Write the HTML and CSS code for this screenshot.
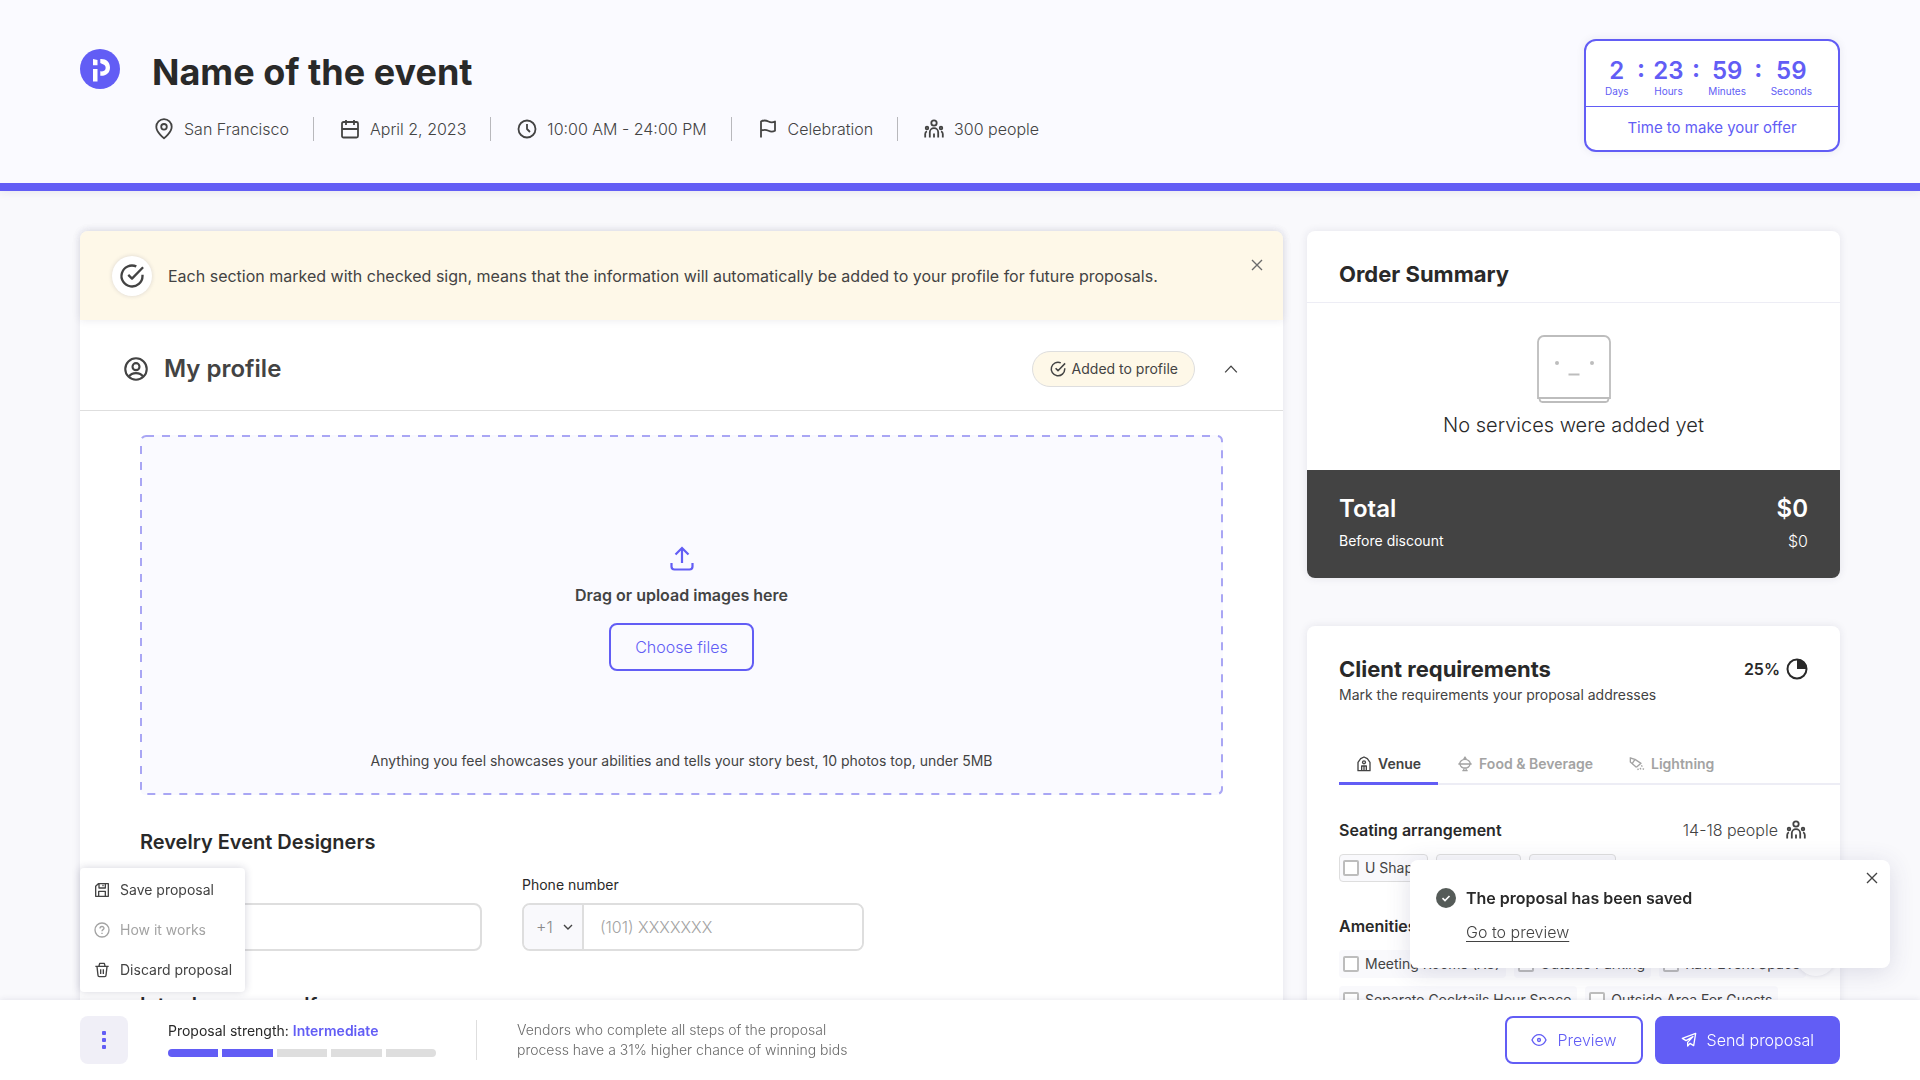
FILE: index.html
```html
<!DOCTYPE html>
<html lang="en">
<head>
<meta charset="utf-8">
<meta name="viewport" content="width=device-width, initial-scale=1">
<title>Name of the event</title>
<link rel="stylesheet" href="styles.css">
</head>
<body>
<svg class="sprite" aria-hidden="true">
  <symbol id="people" viewBox="0 0 24 24">
    <circle cx="12" cy="6" r="2.700"/><circle cx="5" cy="11" r="1.300"/><circle cx="19" cy="11" r="1.300"/>
    <path d="M7.800 20.500v-5.200a4.200 4.200 0 0 1 8.400 0v5.200M12 16.500v4M3.200 20.500v-3.600c0-1.400.6-2.300 1.800-2.600M20.800 20.500v-3.600c0-1.400-.6-2.300-1.800-2.600"/>
  </symbol>
  <symbol id="check-ring" viewBox="0 0 24 24">
    <path d="M21 11v1a9 9 0 1 1-5.300-8.200M21.500 4.500 12 14.200l-3.200-3.200"/>
  </symbol>
  <symbol id="cross" viewBox="0 0 24 24"><path d="M6 6l12 12M18 6 6 18"/></symbol>
</svg>

<header class="header">
  <svg class="logo" viewBox="0 0 40 40" role="img" aria-label="Logo">
    <circle cx="20" cy="20" r="20" fill="#625df5"/>
    <path fill="#fff" d="M13 10 17.500 11V16.300H13zM13 20H17.500V32.500H13zM20.300 10C26 9.500 30 13 30 18.500S26 27.200 20.300 26.800V22.300C24 22.800 26 21.500 25.600 18.300 25.300 15.500 23 15.500 20.300 14z"/>
  </svg>
  <div class="event">
    <h1 class="event-name">Name of the event</h1>
    <ul class="meta">
      <li><svg class="icon" viewBox="0 0 24 24"><path d="M12 21.300S4.300 15.500 4.300 9.800a7.700 7.700 0 0 1 15.400 0c0 5.700-7.700 11.500-7.700 11.500z"/><circle cx="12" cy="9.800" r="2.800"/></svg>San Francisco</li>
      <li><svg class="icon" viewBox="0 0 24 24"><rect x="4" y="5" width="16" height="15.500" rx="1.500"/><path d="M8 3v5M16 3v5M4 12h16"/></svg>April 2, 2023</li>
      <li><svg class="icon" viewBox="0 0 24 24"><circle cx="12" cy="12" r="8.500"/><path d="M12 7v5l3 3"/></svg>10:00 AM - 24:00 PM</li>
      <li><svg class="icon" viewBox="0 0 24 24"><path d="M5 20.500V4.500c3-1.800 5.500-1 7.500 0s4.500 1 6.500 0v9.300c-2 1-4.500 1-6.500 0s-4.500-1.500-7.500 0"/></svg>Celebration</li>
      <li><svg class="icon"><use href="#people"/></svg>300 people</li>
    </ul>
  </div>
  <div class="timer">
    <div class="timer-row">
      <div class="unit"><b>2</b><span>Days</span></div><b class="colon">:</b>
      <div class="unit"><b>23</b><span>Hours</span></div><b class="colon">:</b>
      <div class="unit"><b>59</b><span>Minutes</span></div><b class="colon">:</b>
      <div class="unit"><b>59</b><span>Seconds</span></div>
    </div>
    <div class="timer-note">Time to make your offer</div>
  </div>
</header>

<main class="main">
  <section class="card profile">
    <div class="banner">
      <span class="banner-mark"><svg class="icon icon-lg"><use href="#check-ring"/></svg></span>
      <p>Each section marked with checked sign, means that the information will automatically be added to your profile for future proposals.</p>
      <button class="plain banner-close" type="button" aria-label="Close"><svg class="icon icon-thin"><use href="#cross"/></svg></button>
    </div>
    <div class="profile-head">
      <svg class="icon icon-xl" viewBox="0 0 24 24"><circle cx="12" cy="12" r="9.200"/><circle cx="12" cy="10" r="3"/><path d="M6 18.500c1.300-2.200 3.200-3 6-3s4.700.8 6 3"/></svg>
      <h2>My profile</h2>
      <span class="badge"><svg class="icon icon-md"><use href="#check-ring"/></svg>Added to profile</span>
      <button class="plain" type="button" aria-label="Collapse"><svg class="icon icon-thin" viewBox="0 0 24 24"><path d="M5 16 12 8.500l7 7.500"/></svg></button>
    </div>
    <div class="profile-body">
      <div class="drop">
        <svg class="drop-outline" aria-hidden="true"><rect x="1" y="1" rx="5"/></svg>
        <div class="drop-main">
          <svg class="upload" viewBox="0 0 28 28"><path d="M14 18V3.500M7.500 9.500 14 3l6.500 6.500M3.500 18v3.500a3 3 0 0 0 3 3h15a3 3 0 0 0 3-3V18"/></svg>
          <p class="drop-title">Drag or upload images here</p>
          <button class="btn btn-outline" type="button">Choose files</button>
        </div>
        <p class="drop-note">Anything you feel showcases your abilities and tells your story best, 10 photos top, under 5MB</p>
      </div>
      <h3>Revelry Event Designers</h3>
      <form class="fields">
        <div class="field">
          <input class="control" type="text" aria-label="Name">
        </div>
        <div class="field">
          <label for="phone">Phone number</label>
          <div class="control phone">
            <span class="code">
              <select aria-label="Country code"><option>+1</option></select>
              <svg class="caret" viewBox="0 0 12 12"><path d="M2 4l4 4 4-4"/></svg>
            </span>
            <input id="phone" type="tel" placeholder="(101) XXXXXXX">
          </div>
        </div>
      </form>
      <h3>Introduce yourself</h3>
    </div>
  </section>

  <aside class="side">
    <section class="card">
      <h2 class="side-title order-title">Order Summary</h2>
      <div class="empty">
        <svg class="face" viewBox="0 0 74 68"><path d="M1 63V7a6 6 0 0 1 6-6h60a6 6 0 0 1 6 6v56zM2.500 63q0 4 3 4h63q3 0 3-4M31.500 39.500h11"/><circle cx="20" cy="28" r="2"/><circle cx="55" cy="28" r="2"/></svg>
        <p>No services were added yet</p>
      </div>
      <dl class="totals">
        <div class="total"><dt>Total</dt><dd>$0</dd></div>
        <div class="before"><dt>Before discount</dt><dd>$0</dd></div>
      </dl>
    </section>

    <section class="card requirements">
      <div class="req-head">
        <h2 class="side-title">Client requirements</h2>
        <span class="percent">25%<svg class="pie" viewBox="0 0 22 22"><circle cx="11" cy="11" r="9.500" fill="none" stroke="currentColor" stroke-width="2"/><path fill="currentColor" d="M11 11V1a10 10 0 0 1 10 10z"/></svg></span>
      </div>
      <p class="req-note">Mark the requirements your proposal addresses</p>
      <nav class="tabs">
        <button class="tab active" type="button"><svg class="icon icon-sm" viewBox="0 0 24 24"><path d="M3 22V9.500L7 4l5-2.500L17 4l4 5.500V22zM8.500 22v-7h7v7M12 15v7"/><circle cx="12" cy="9.500" r="2.200"/></svg>Venue</button>
        <button class="tab" type="button"><svg class="icon icon-sm" viewBox="0 0 24 24"><path d="M2 12h20M4 12a8 7 0 0 1 16 0M4.500 12.500c1 4 4 5.500 7.500 5.500s6.500-1.500 7.500-5.500M10.500 18l-.5 4h4l-.5-4M8 22h8M10 5l2-3.500L14 5"/></svg>Food &amp; Beverage</button>
        <button class="tab" type="button"><svg class="icon icon-sm" viewBox="0 0 24 24"><path d="M2 2v7l9 8M2 3l7 2 9 6-7 6M9 5l-4 6M18 11l-3-2M14 21l-1-2M18 20l-1.500-2M20 16l-1.500-2M22.500 20l-2-1"/></svg>Lightning</button>
      </nav>
      <div class="group-head"><h3>Seating arrangement</h3><span class="capacity">14-18 people<svg class="icon"><use href="#people"/></svg></span></div>
      <div class="chips outlined">
        <label class="chip"><input type="checkbox">U Shape</label>
        <label class="chip"><input type="checkbox">Theater</label>
        <label class="chip"><input type="checkbox">Banquet</label>
      </div>
      <div class="group-head"><h3>Amenities</h3></div>
      <div class="chips">
        <label class="chip"><input type="checkbox">Meeting Rooms (X3)</label>
        <label class="chip"><input type="checkbox">Outside Parking</label>
        <label class="chip"><input type="checkbox">Raw Event Space</label>
        <label class="chip"><input type="checkbox">Separate Cocktails Hour Space</label>
        <label class="chip"><input type="checkbox">Outside Area For Guests</label>
      </div>
    </section>
  </aside>
</main>

<button class="fab" type="button" aria-label="Help"></button>

<div class="toast" role="status">
  <svg class="toast-mark" viewBox="0 0 20 20"><circle cx="10" cy="10" r="10" fill="#555b58"/><path d="M6.500 10.200 9 12.600l4.500-4.600" fill="none" stroke="#fff" stroke-width="1.600"/></svg>
  <div class="toast-body">
    <strong>The proposal has been saved</strong>
    <a href="#preview">Go to preview</a>
  </div>
  <button class="plain toast-close" type="button" aria-label="Close"><svg class="icon icon-thin"><use href="#cross"/></svg></button>
</div>

<footer class="footer">
  <div class="more-wrap">
    <button class="more" type="button" aria-label="More"><svg viewBox="0 0 4 18"><rect width="4" height="4" rx="1"/><rect y="7" width="4" height="4" rx="1"/><rect y="14" width="4" height="4" rx="1"/></svg></button>
    <div class="menu">
      <button type="button"><svg class="icon icon-sm" viewBox="0 0 24 24"><path d="M2.500 21.500V6.500l4-4h15v19zM7.500 3v6h9.500V3M7 21v-7h10v7M13.500 4v2.500"/></svg>Save proposal</button>
      <button type="button" disabled><svg class="icon icon-sm" viewBox="0 0 24 24"><circle cx="12" cy="12" r="10.500"/><path d="M9 9.800c0-4 6-4 6-.3 0 2-3 2-3 4.300M12 16v2"/></svg>How it works</button>
      <button type="button"><svg class="icon icon-sm" viewBox="0 0 24 24"><path d="M2 6.500h20M4.500 7l1.500 13a2 2 0 0 0 2 2h8a2 2 0 0 0 2-2L19.500 7M7.500 6l1-4h7l1 4M10 11v7M14 11v7"/></svg>Discard proposal</button>
    </div>
  </div>
  <div class="strength">
    <p>Proposal strength: <strong>Intermediate</strong></p>
    <div class="meter"><i class="on"></i><i class="on"></i><i></i><i></i><i></i></div>
  </div>
  <p class="tip">Vendors who complete all steps of the proposal process have a 31% higher chance of winning bids</p>
  <div class="actions">
    <button class="btn btn-outline" type="button"><svg class="icon icon-sm" viewBox="0 0 24 24"><path d="M1.500 12C4 6.500 8 4 12 4s8 2.500 10.500 8C20 17.500 16 20 12 20s-8-2.500-10.500-8z"/><circle cx="12" cy="12" r="2.200"/></svg>Preview</button>
    <button class="btn btn-solid" type="button"><svg class="icon icon-sm" viewBox="0 0 24 24"><path d="M22 2 2 9.500l5.500 3.500L18 7l-8 8.500V21l3.500-4 5.500 3.500z"/></svg>Send proposal</button>
  </div>
</footer>
</body>
</html>
```
FILE: styles.css
```css
:root {
  --violet: #625df5;
  --ink: #292929;
  --text: #434343;
  --muted: #a3a3a3;
  --line: #dedede;
}

* { box-sizing: border-box; }

body {
  margin: 0;
  min-height: 100vh;
  display: flex;
  flex-direction: column;
  background: #f9f9fc;
  color: var(--text);
  font: 300 16px/24px Inter, "Liberation Sans", sans-serif;
}

h1, h2, h3, p, ul, dl, dd { margin: 0; padding: 0; }
h3 { color: var(--ink); font-weight: 600; }
button, input, select { font: inherit; color: inherit; }
button { cursor: pointer; }

.sprite { display: none; }

.icon {
  width: 24px;
  height: 24px;
  flex: none;
  fill: none;
  stroke: currentColor;
  stroke-width: 1.8;
  stroke-linejoin: round;
}
.icon-sm { width: 16px; height: 16px; stroke-width: 2; }
.icon-md { width: 18px; height: 18px; stroke-width: 2; }
.icon-lg { width: 28px; height: 28px; stroke-width: 2; }
.icon-xl { width: 28px; height: 28px; stroke-width: 1.8; }
.icon-thin { width: 20px; height: 20px; stroke-width: 1.6; }

.plain {
  display: flex;
  padding: 0;
  border: 0;
  background: none;
}

/* Header */
.header {
  display: flex;
  padding: 39px 80px 31px;
  border-bottom: 8px solid var(--violet);
  background: #fafaff;
  box-shadow: 0 2px 8px rgba(40, 40, 80, .08);
}
.logo { width: 40px; height: 40px; margin-top: 10px; }
.event { flex: 1; padding-left: 32px; }
.event-name {
  color: var(--ink);
  font-size: 36px;
  line-height: 48px;
  padding-top: 9px;
  font-weight: 700;
}
.meta {
  display: flex;
  margin-top: 21px;
  list-style: none;
}
.meta li {
  display: flex;
  align-items: center;
  gap: 8px;
}
.meta li + li::before {
  content: "";
  width: 1px;
  height: 24px;
  margin: 0 16px 0 24px;
  background: #b8b8bc;
}

.timer {
  width: 256px;
  height: 113px;
  border: 2px solid var(--violet);
  border-radius: 12px;
  background: #fff;
  color: var(--violet);
  box-shadow: 0 0 8px rgba(40, 40, 80, .08);
}
.timer-row {
  display: flex;
  justify-content: space-between;
  height: 66px;
  padding: 16px 26px 0 19px;
  border-bottom: 1px solid var(--violet);
}
.unit { display: flex; flex-direction: column; align-items: center; }
.timer b { font-size: 24px; line-height: 28px; font-weight: 600; }
.timer b.colon { line-height: 24px; font-weight: 700; }
.unit span { font-size: 10px; line-height: 12px; font-weight: 400; }
.timer-note { padding-top: 9px; text-align: center; font-size: 15px; font-weight: 400; }

/* Columns */
.main {
  flex: 1;
  display: grid;
  grid-template-columns: minmax(0, 1203fr) minmax(0, 533fr);
  gap: 24px;
  padding: 40px 80px 0;
}
.card {
  border-radius: 8px;
  background: #fff;
  box-shadow: 0 0 8px rgba(40, 40, 80, .1);
}
.side { display: flex; flex-direction: column; gap: 48px; }

.banner {
  display: flex;
  align-items: center;
  gap: 16px;
  height: 89px;
  padding: 0 16px 0 32px;
  border-radius: 8px 8px 0 0;
  background: #fef8e8;
  box-shadow: 0 0 8px rgba(40, 40, 80, .1);
}
.banner p { flex: 1; font-weight: 400; }
.banner-mark {
  display: grid;
  place-items: center;
  width: 40px;
  height: 40px;
  border-radius: 50%;
  background: #fff;
  box-shadow: 0 0 4px rgba(40, 40, 80, .16);
}
.banner-close { align-self: flex-start; margin-top: 24px; color: #6b6b6b; }

.profile-head {
  display: flex;
  align-items: center;
  height: 91px;
  padding: 8px 42px 0;
  border-bottom: 1px solid var(--line);
}
.profile-head h2 {
  flex: 1;
  padding-left: 14px;
  font-size: 24px;
  font-weight: 600;
}
.badge {
  display: flex;
  align-items: center;
  gap: 5px;
  height: 36px;
  margin-right: 26px;
  padding: 0 16px;
  border: 1px solid var(--line);
  border-radius: 18px;
  background: #fef8e8;
  font-size: 14px;
  font-weight: 400;
}

.profile-body { padding: 24px 60px 0; }
.drop {
  position: relative;
  display: flex;
  flex-direction: column;
  align-items: center;
  justify-content: space-between;
  height: 360px;
  padding: 110px 0 22px;
  border-radius: 6px;
  background: #fafaff;
}
.drop-outline {
  position: absolute;
  inset: 0;
  width: 100%;
  height: 100%;
}
.drop-outline rect {
  width: calc(100% - 2px);
  height: calc(100% - 2px);
  fill: none;
  stroke: #a9a6f4;
  stroke-width: 2;
  stroke-dasharray: 8 8;
}
.drop-main {
  position: relative;
  display: flex;
  flex-direction: column;
  align-items: center;
}
.upload {
  width: 28px;
  height: 28px;
  fill: none;
  stroke: var(--violet);
  stroke-width: 2.2;
}
.drop-title { margin: 10px 0 16px; font-weight: 600; }
.drop-note { font-size: 14px; line-height: 24px; font-weight: 400; }

.btn {
  display: flex;
  align-items: center;
  gap: 10px;
  height: 48px;
  padding: 0 24px;
  border: 2px solid var(--violet);
  border-radius: 8px;
}
.btn-outline { background: transparent; color: var(--violet); }
.btn-solid { background: var(--violet); color: #fff; }

.profile-body h3 { margin-top: 35px; font-size: 20px; }
.profile-body .fields + h3 { margin-top: 42px; }
.fields { display: flex; align-items: flex-end; gap: 40px; margin-top: 19px; }
.field { display: flex; flex-direction: column; gap: 6px; }
.field label { color: var(--ink); font-size: 14px; font-weight: 400; }
.control {
  width: 342px;
  height: 48px;
  padding: 0;
  border: 2px solid var(--line);
  border-radius: 8px;
  background: #fff;
}
.phone { display: flex; overflow: hidden; }
.phone input { flex: 1; min-width: 0; padding: 0 16px; border: 0; }
.phone input::placeholder { color: var(--muted); opacity: 1; }
.code {
  display: flex;
  align-items: center;
  width: 60px;
  padding: 0 8px 0 12px;
  border-right: 2px solid var(--line);
  background: #f9f9fc;
  color: #8a8a8a;
}
.code select { flex: 1; min-width: 0; padding: 0; border: 0; appearance: none; background: none; }
.caret { width: 12px; height: 12px; fill: none; stroke: var(--text); stroke-width: 1.4; }

/* Order summary */
.side-title { color: var(--ink); font-size: 22px; line-height: 32px; font-weight: 700; }
.order-title { padding: 27px 32px 12px; border-bottom: 1px solid #ededf5; }
.empty {
  display: flex;
  flex-direction: column;
  align-items: center;
  gap: 8px;
  padding: 32px 0 31px;
  color: var(--ink);
  font-size: 20px;
}
.empty p { line-height: 28px; }
.face { width: 74px; height: 68px; fill: none; stroke: #bdbdbd; stroke-width: 1.8; }
.face circle { fill: #bdbdbd; stroke: none; }
.totals {
  height: 108px;
  padding: 23px 32px 0;
  border-radius: 0 0 8px 8px;
  background: #434343;
  color: #fff;
}
.totals div { display: flex; justify-content: space-between; }
.total { font-size: 24px; line-height: 32px; font-weight: 600; }
.before { margin-top: 4px; }
.before dt { font-size: 14px; font-weight: 400; }

/* Client requirements */
.requirements { flex: 1; padding: 27px 32px 0; }
.req-head { display: flex; justify-content: space-between; }
.percent { display: flex; align-items: center; gap: 6px; color: var(--ink); font-weight: 600; }
.pie { width: 22px; height: 22px; }
.req-note { font-size: 14px; line-height: 20px; font-weight: 400; }
.tabs {
  display: flex;
  gap: 2px;
  margin: 40px -32px 0 0;
  border-bottom: 2px solid #ededf5;
}
.tab {
  display: flex;
  align-items: center;
  gap: 6px;
  height: 40px;
  margin-bottom: -2px;
  padding: 0 17px;
  border: 0;
  border-bottom: 3px solid transparent;
  background: none;
  color: var(--muted);
  font-size: 14px;
  font-weight: 600;
}
.tab.active { border-color: var(--violet); color: var(--text); }
.group-head { display: flex; justify-content: space-between; margin-top: 33px; }
.chips + .group-head { margin-top: 32px; }
.group-head h3 { font-size: 16px; }
.capacity { display: flex; gap: 6px; }
.chips { display: flex; flex-wrap: wrap; gap: 8px; margin: 12px -20px 0 0; }
.chip {
  display: flex;
  align-items: center;
  gap: 6px;
  height: 28px;
  padding: 0 6px 0 4px;
  border-radius: 4px;
  background: #f9f9fc;
  font-size: 14px;
  font-weight: 400;
}
.outlined .chip { padding: 0 6px 0 3px; border: 1px solid var(--line); }
.chip input {
  width: 16px;
  height: 16px;
  margin: 0;
  border: 2px solid #bdbdbd;
  border-radius: 2px;
  appearance: none;
  background: #fff;
}

/* Floating layers */
.fab {
  position: fixed;
  right: 84px;
  bottom: 104px;
  width: 40px;
  height: 40px;
  border: 0;
  border-radius: 50%;
  background: #fff;
  box-shadow: 0 0 4px rgba(40, 40, 80, .14);
}
.toast {
  position: fixed;
  right: 30px;
  bottom: 112px;
  display: flex;
  gap: 10px;
  width: 480px;
  height: 108px;
  padding: 26px 8px 0 26px;
  border-radius: 8px;
  background: #fff;
  box-shadow: 0 4px 24px rgba(60, 60, 110, .16);
}
.toast-mark { width: 20px; height: 20px; margin-top: 2px; }
.toast-body { flex: 1; display: flex; flex-direction: column; align-items: flex-start; gap: 10px; }
.toast strong { color: var(--ink); font-weight: 600; }
.toast a { color: inherit; text-underline-offset: 3px; }
.toast-close { align-self: flex-start; margin-top: -18px; }

/* Bottom bar */
.footer {
  position: fixed;
  left: 0;
  right: 0;
  bottom: 0;
  display: flex;
  align-items: center;
  height: 80px;
  padding: 0 80px;
  background: #fff;
  box-shadow: 0 0 6px rgba(40, 40, 80, .12);
}
.more-wrap { position: relative; }
.more {
  display: grid;
  place-items: center;
  width: 48px;
  height: 48px;
  border: 0;
  border-radius: 8px;
  background: #f0eff7;
}
.more svg { width: 4px; height: 18px; fill: var(--violet); }
.menu {
  position: absolute;
  left: 0;
  bottom: 72px;
  padding: 2px 0;
  border-radius: 4px;
  background: #fff;
  box-shadow: 0 0 8px rgba(40, 40, 80, .2);
}
.menu button {
  display: flex;
  align-items: center;
  gap: 10px;
  width: 100%;
  height: 40px;
  padding: 0 13px 0 14px;
  border: 0;
  background: none;
  font-size: 14px;
  font-weight: 400;
  white-space: nowrap;
}
.menu button:disabled { color: var(--muted); }
.strength {
  width: 309px;
  height: 40px;
  margin-left: 40px;
  border-right: 1px solid var(--line);
  color: var(--ink);
  font-size: 14px;
  line-height: 20px;
  font-weight: 400;
}
.strength strong { color: var(--violet); font-weight: 600; }
.strength p { padding-top: 1px; }
.meter { display: flex; gap: 4px; width: 268px; margin-top: 8px; overflow: hidden; border-radius: 4px; }
.meter i { flex: 1; height: 8px; background: var(--line); }
.meter .on { background: var(--violet); }
.tip { width: 344px; margin-left: 40px; color: #6b6b6b; font-size: 14px; line-height: 20px; }
.actions { display: flex; gap: 12px; margin-left: auto; }
```
